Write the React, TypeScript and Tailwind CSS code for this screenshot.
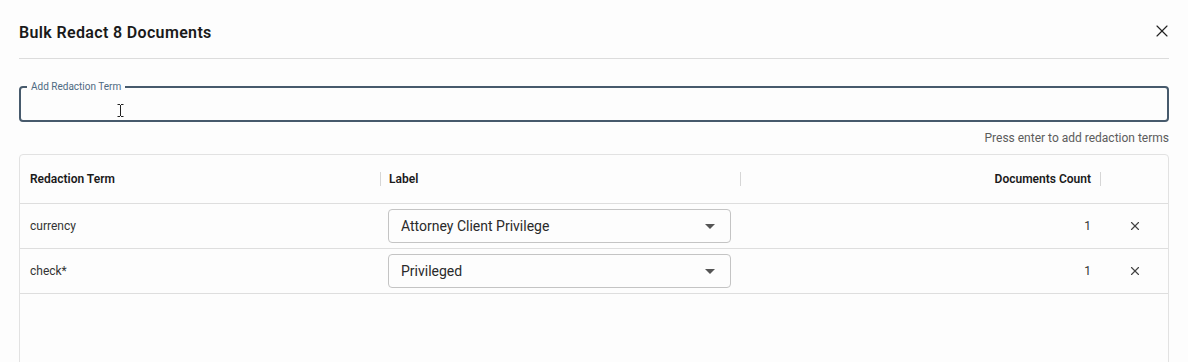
import React from 'react';
import { X } from 'lucide-react';

const ROWS = [
  { term: 'currency', label: 'Attorney Client Privilege', count: 1 },
  { term: 'check*', label: 'Privileged', count: 1 },
];

const ColSep = () => <span className="w-px h-[14px] bg-[#d6d6d6]" />;

const App: React.FC = () => {
  return (
    <div className="w-[1188px] h-[362px] bg-[#fdfdfd] overflow-hidden font-['Roboto',sans-serif] text-[#1d1d1f]">
      <div className="px-[19px]">
        {/* Header */}
        <div className="flex items-center justify-between h-[59px] pt-[8px] border-b border-[#dcdcdc]">
          <h2 className="text-[16px] font-semibold tracking-[0.35px] text-[#1a1a1a]">Bulk Redact 8 Documents</h2>
          <X size={20} strokeWidth={1.4} className="text-[#222] mr-[-3px] mt-[-4px]" />
        </div>

        {/* Input */}
        <fieldset className="relative mt-[23px] h-[40px] border-2 border-[#475a6c] rounded-[4px] px-[6px]">
          <legend className="px-[4px] text-[10px] leading-[10px] text-[#4f6a82]">Add Redaction Term</legend>
          <svg className="absolute left-[96px] top-[12px]" width="7" height="13" viewBox="0 0 7 13">
            <path d="M0.5 0.5h2.5M4 0.5h2.5M3.5 1v11M0.5 12.5h2.5M4 12.5h2.5" stroke="#222" strokeWidth="1" fill="none" />
          </svg>
        </fieldset>
        <div className="text-right text-[12px] text-[#5c5c5c] mt-[9px] leading-[14px]">Press enter to add redaction terms</div>

        {/* Table */}
        <div className="mt-[9px] h-[220px] border border-[#e2e2e2] rounded-[4px] text-[12px]">
          <div className="flex items-center h-[49px] border-b border-[#dedede] font-semibold text-[#1a1a1a]">
            <div className="w-[360px] pl-[10px]">Redaction Term</div>
            <ColSep />
            <div className="w-[359px] pl-[8px]">Label</div>
            <ColSep />
            <div className="w-[359px] pr-[9px] text-right">Documents Count</div>
            <ColSep />
          </div>
          {ROWS.map((r, i) => (
            <div key={i} className="flex items-center h-[45px] border-b border-[#dedede]">
              <div className="w-[361px] pl-[10px] text-[#333]">{r.term}</div>
              <div className="w-[360px] pl-[7px]">
                <div className="flex items-center justify-between w-[343px] h-[34px] border border-[#c4c4c4] rounded-[4px] pl-[12px] pr-[15px] text-[14px] text-[#2a2a2a]">
                  <span>{r.label}</span>
                  <svg width="10" height="5" viewBox="0 0 10 5"><path d="M0 0h10L5 5z" fill="#555" /></svg>
                </div>
              </div>
              <div className="w-[360px] pr-[10px] text-right text-[#333]">{r.count}</div>
              <div className="flex-1 flex justify-center">
                <X size={14} strokeWidth={2} className="text-[#444]" />
              </div>
            </div>
          ))}
        </div>
      </div>
    </div>
  );
};

export default App;
